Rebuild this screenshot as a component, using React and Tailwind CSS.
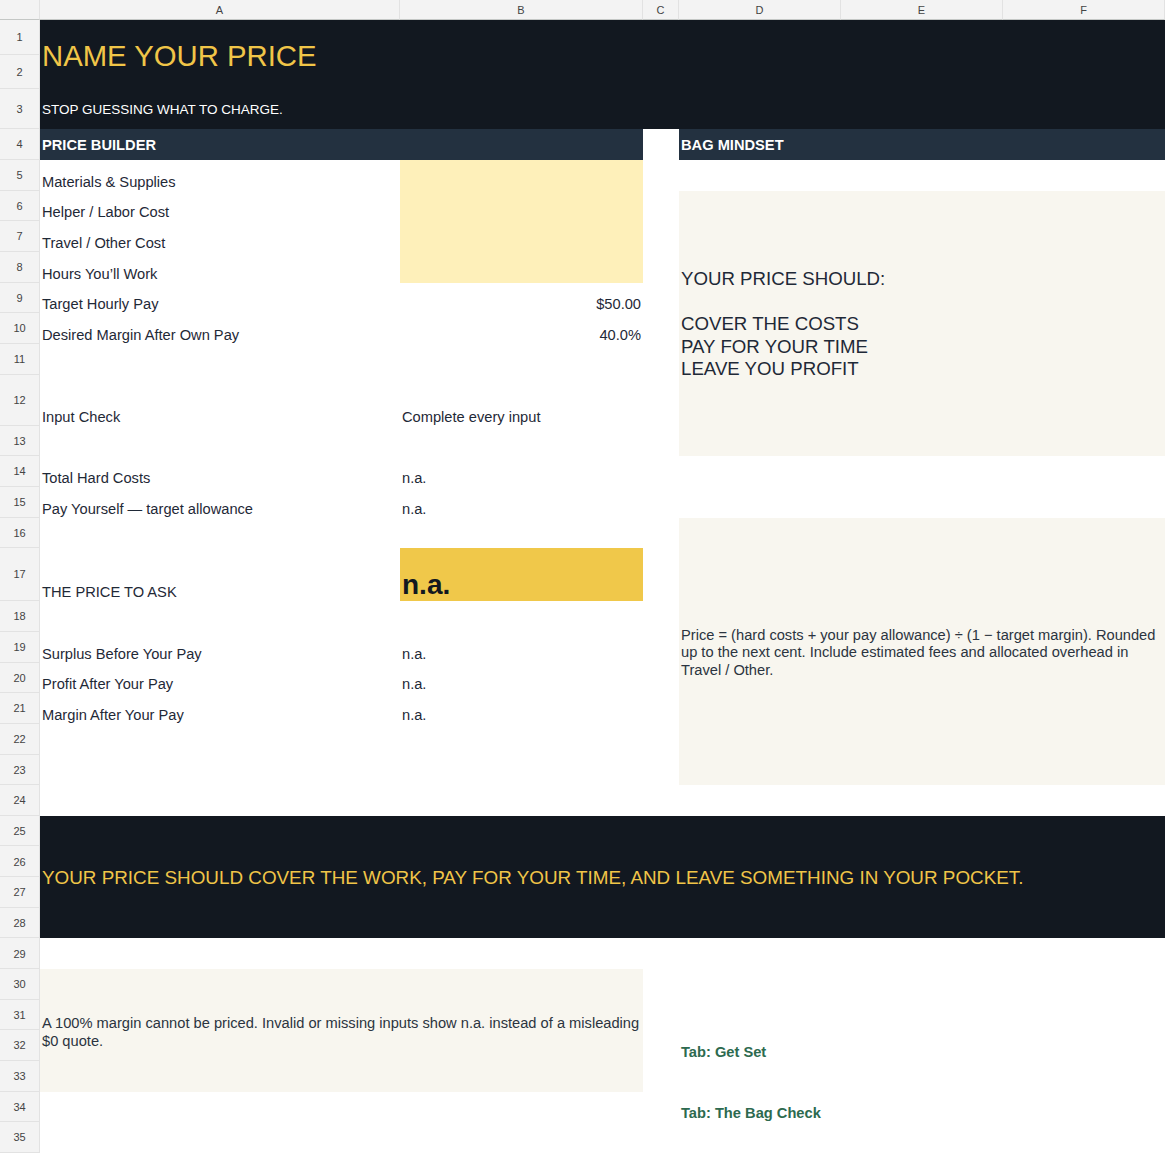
const rows = Array.from({ length: 35 }, (_, i) => i + 1);
const cols = ["A", "B", "C", "D", "E", "F"];

const label = "col-start-2 flex items-end px-[2px] text-[14.67px] leading-[17px] text-[#1f2937] whitespace-nowrap";
const valB = "col-start-3 flex items-end px-[2px] text-[14.67px] leading-[17px] text-[#1f2937] whitespace-nowrap";

export default function App() {
    return (
        <div
            className="w-[1165px] h-[1153px] overflow-hidden bg-white"
            style={{ fontFamily: '"Liberation Sans", Arial, sans-serif' }}
        >
            <div className="grid grid-cols-[40px_360px_243px_36px_162px_162px_162px] grid-rows-[20px_34.5px_34.5px_40px_31px_30.67px_30.67px_30.67px_30.67px_30.67px_30.67px_30.67px_51px_30.67px_30.67px_30.67px_30.67px_53px_30.67px_30.67px_30.67px_30.67px_30.67px_30.67px_30.67px_30.67px_30.67px_30.67px_30.67px_30.67px_30.67px_30.67px_30.67px_30.67px_30.67px_30.67px]">
                {/* headers */}
                <div className="bg-[#f3f3f3] border-r border-b border-r-[#e2e2e2] border-b-[#c4c7c5]" />
                {cols.map((c) => (
                    <div
                        key={c}
                        className="bg-[#f3f3f3] border-r border-r-[#e2e2e2] border-b border-b-[#c4c7c5] flex items-center justify-center pt-[1px] text-[11px] text-[#444]"
                    >
                        {c}
                    </div>
                ))}
                {rows.map((r) => (
                    <div
                        key={r}
                        className="col-start-1 bg-[#f3f3f3] border-b border-b-[#e2e2e2] border-r border-r-[#e2e2e2] flex items-center justify-center pt-[1px] text-[11px] text-[#444]"
                    >
                        {r}
                    </div>
                ))}

                {/* title band */}
                <div className="col-start-2 col-span-6 row-start-2 row-span-2 bg-[#121820] flex items-center px-[2px] pt-[3px] text-[29.3px] leading-none text-[#f0c548] whitespace-nowrap">
                    NAME YOUR PRICE
                </div>
                <div className="col-start-2 col-span-6 row-start-4 bg-[#121820] flex items-center px-[2px] pt-[2px] text-[13.5px] text-white whitespace-nowrap">
                    STOP GUESSING WHAT TO CHARGE.
                </div>

                {/* section headers */}
                <div className="col-start-2 col-span-2 row-start-5 bg-[#233140] flex items-center px-[2px] pt-[1px] text-[14.67px] font-bold text-white whitespace-nowrap">
                    PRICE BUILDER
                </div>
                <div className="col-start-5 col-span-3 row-start-5 bg-[#233140] flex items-center px-[2px] pt-[1px] text-[14.67px] font-bold text-white whitespace-nowrap">
                    BAG MINDSET
                </div>

                {/* inputs */}
                <div className={`${label} row-start-6`}>Materials &amp; Supplies</div>
                <div className={`${label} row-start-7`}>Helper / Labor Cost</div>
                <div className={`${label} row-start-8`}>Travel / Other Cost</div>
                <div className={`${label} row-start-9`}>Hours You’ll Work</div>
                <div className={`${label} row-start-10`}>Target Hourly Pay</div>
                <div className={`${label} row-start-11`}>Desired Margin After Own Pay</div>
                <div className="col-start-3 row-start-6 row-span-4 bg-[#fef0ba]" />
                <div className={`${valB} row-start-10 justify-end`}>$50.00</div>
                <div className={`${valB} row-start-11 justify-end`}>40.0%</div>

                <div className={`${label} row-start-13`}>Input Check</div>
                <div className={`${valB} row-start-13`}>Complete every input</div>

                <div className={`${label} row-start-15`}>Total Hard Costs</div>
                <div className={`${valB} row-start-15`}>n.a.</div>
                <div className={`${label} row-start-16`}>Pay Yourself — target allowance</div>
                <div className={`${valB} row-start-16`}>n.a.</div>

                <div className={`${label} row-start-18`}>THE PRICE TO ASK</div>
                <div className="col-start-3 row-start-18 bg-[#f0c84a] flex items-end px-[2px] pb-[1px] text-[28px] leading-[30px] font-bold text-[#121820]">
                    n.a.
                </div>

                <div className={`${label} row-start-20`}>Surplus Before Your Pay</div>
                <div className={`${valB} row-start-20`}>n.a.</div>
                <div className={`${label} row-start-21`}>Profit After Your Pay</div>
                <div className={`${valB} row-start-21`}>n.a.</div>
                <div className={`${label} row-start-22`}>Margin After Your Pay</div>
                <div className={`${valB} row-start-22`}>n.a.</div>

                {/* mindset panels */}
                <div className="col-start-5 col-span-3 row-start-7 row-span-8 bg-[#f8f6ef] flex items-center px-[2px] pt-[2px] text-[18.67px] leading-[22.5px] text-[#1f2937] whitespace-nowrap">
                    <div>
                        YOUR PRICE SHOULD:
                        <br />
                        <br />
                        COVER THE COSTS
                        <br />
                        PAY FOR YOUR TIME
                        <br />
                        LEAVE YOU PROFIT
                    </div>
                </div>
                <div className="col-start-5 col-span-3 row-start-17 row-span-8 bg-[#f8f6ef] flex items-center pl-[2px] pr-[6px] pt-[3px] text-[14.67px] leading-[17.5px] text-[#2b3440]">
                    <p>
                        Price = (hard costs + your pay allowance) ÷ (1 − target margin). Rounded up to the next cent. Include estimated fees and allocated overhead in Travel / Other.
                    </p>
                </div>

                {/* bottom band */}
                <div className="col-start-2 col-span-6 row-start-26 row-span-4 bg-[#121820] flex items-center px-[2px] pt-[2px] text-[18.85px] text-[#f0c548] whitespace-nowrap">
                    YOUR PRICE SHOULD COVER THE WORK, PAY FOR YOUR TIME, AND LEAVE SOMETHING IN YOUR POCKET.
                </div>

                <div className="col-start-2 col-span-2 row-start-31 row-span-4 bg-[#f8f6ef] flex items-center px-[2px] pt-[3px] text-[14.67px] leading-[18px] text-[#2b3440]">
                    <p>
                        A 100% margin cannot be priced. Invalid or missing inputs show n.a. instead of a misleading $0 quote.
                    </p>
                </div>

                <div className="col-start-5 col-span-3 row-start-33 flex items-end px-[2px] text-[14.67px] leading-[17px] font-bold text-[#2d6a4f] whitespace-nowrap">
                    Tab: Get Set
                </div>
                <div className="col-start-5 col-span-3 row-start-35 flex items-end px-[2px] text-[14.67px] leading-[17px] font-bold text-[#2d6a4f] whitespace-nowrap">
                    Tab: The Bag Check
                </div>
            </div>
        </div>
    );
}
